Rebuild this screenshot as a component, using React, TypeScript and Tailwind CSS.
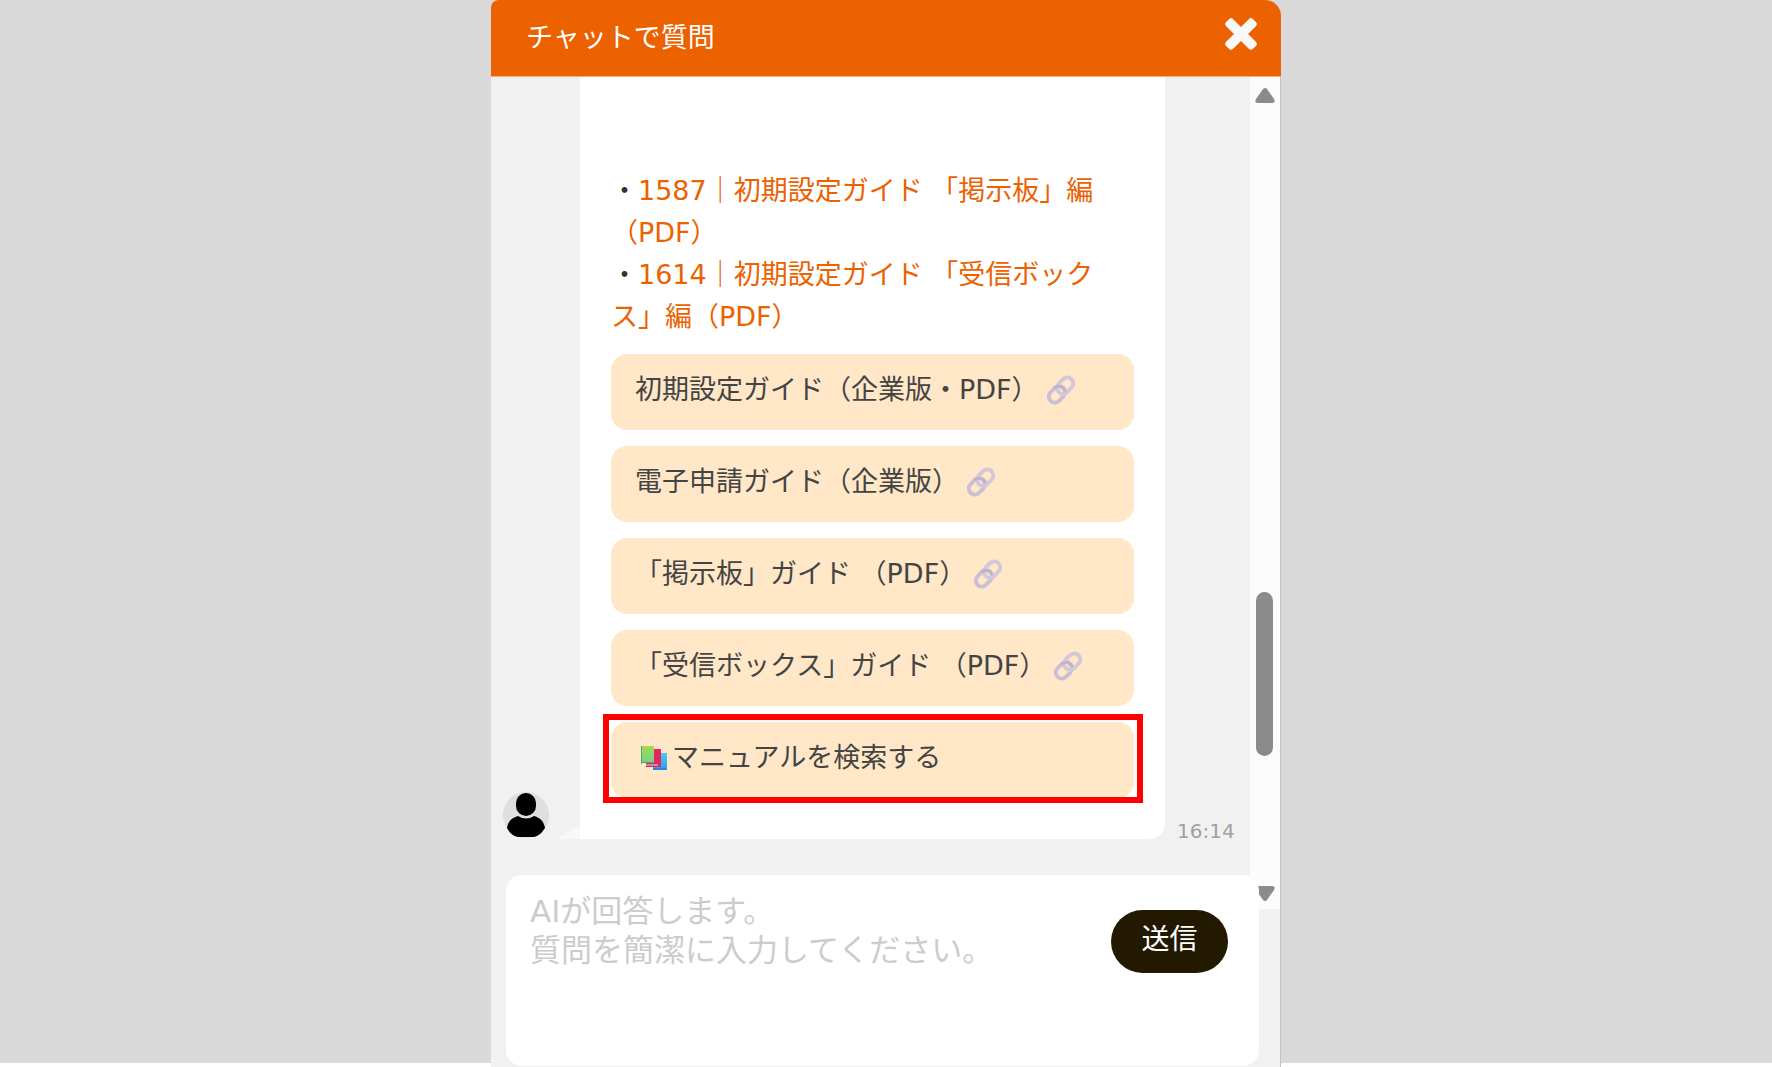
const guideLinks = [
  { id: "1587", title: "1587｜初期設定ガイド 「掲示板」編（PDF）" },
  { id: "1614", title: "1614｜初期設定ガイド 「受信ボックス」編（PDF）" },
];

const options = [
  "初期設定ガイド（企業版・PDF）",
  "電子申請ガイド（企業版）",
  "「掲示板」ガイド （PDF）",
  "「受信ボックス」ガイド （PDF）",
];

const optionClass =
  "flex h-[76px] w-full items-start rounded-2xl bg-[#ffe7c8] px-6 pt-[15px] text-left text-[27px] leading-[42px] text-[#444]";

function LinkIcon() {
  return (
    <svg viewBox="0 0 28 30" className="ml-2 mt-[6px] h-[30px] w-7 shrink-0" fill="none" aria-hidden="true">
      <g transform="rotate(-47 14 15)" strokeWidth="4">
        <rect x="-1" y="9" width="18" height="12" rx="6" stroke="#cbc0d3" />
        <rect x="11" y="9" width="18" height="12" rx="6" stroke="#d3c8d8" />
        <path d="M11 9a6 6 0 0 1 6 6a6 6 0 0 1-1 4" stroke="#bfb2cd" strokeWidth="3" />
      </g>
    </svg>
  );
}

function BooksIcon() {
  return (
    <svg viewBox="0 0 28 26" className="ml-[5px] mr-1 mt-2 h-[26px] w-7 shrink-0" aria-hidden="true">
      <defs>
        <linearGradient id="bookGreen" x1="0" y1="0" x2="0" y2="1">
          <stop offset="0" stopColor="#a2dc4f" />
          <stop offset="1" stopColor="#74d08a" />
        </linearGradient>
        <linearGradient id="bookBlue" x1="0" y1="0" x2="0" y2="1">
          <stop offset="0" stopColor="#4cc9f5" />
          <stop offset="1" stopColor="#2a9cf0" />
        </linearGradient>
      </defs>
      <path d="M13 8h14v17H13z" fill="url(#bookBlue)" />
      <path d="M13 23h13v2H13z" fill="#2f7fd6" />
      <path d="M6 4h15v18H6z" fill="#e0285f" />
      <path d="M6 19h12v2H6z" fill="#c98aa8" />
      <path d="M1 1h13v17H1z" fill="url(#bookGreen)" />
      <path d="M1 1h1v18H1zM1 17h13v1H1z" fill="#4fa868" />
    </svg>
  );
}

function Avatar() {
  return (
    <svg viewBox="0 0 48 48" className="h-12 w-12 shrink-0" role="img" aria-label="オペレーター">
      <circle cx="24" cy="24" r="23" fill="#dfdfdf" />
      <rect x="14" y="2" width="20" height="23" rx="10" fill="#000" />
      <path d="M16 25q8 5 16 0c7 2 10 6 11 12q-5 8-11 9H16q-7-1-11-9c1-6 4-10 11-12z" fill="#000" />
    </svg>
  );
}

function ScrollTrack() {
  return (
    <div className="flex w-[30px] shrink-0 flex-col items-center bg-[#fcfcfc] pb-2 pr-px pt-[11px]" aria-hidden="true">
      <svg viewBox="0 0 20 15" className="h-[15px] w-5" fill="#8b8b8b">
        <path d="M8 1q2-2 4 0l7 10q2 4-2 4H3q-4 0-2-4z" />
      </svg>
      <div className="mb-[130px] mt-auto h-[164px] w-[17px] rounded-full bg-[#8b8b8b]" />
      <svg viewBox="0 0 20 15" className="h-[15px] w-5" fill="#8b8b8b">
        <path d="M8 14q2 2 4 0l7-10q2-4-2-4H3Q-1 0 1 4z" />
      </svg>
    </div>
  );
}

export default function App() {
  return (
    <div className="flex min-h-screen bg-white font-['DejaVu_Sans','Noto_Sans_CJK_JP',sans-serif] [text-spacing-trim:space-all]">
      <div className="mb-1 flex-1 bg-[#d9d9d9]" />

      <main className="flex w-full max-w-[790px] flex-col bg-[#d9d9d9]">
        {/* Header */}
        <header className="flex h-[77px] items-start justify-between rounded-tl-lg rounded-tr-2xl border-b border-[#f3b080] bg-[#ec6100] pl-[35px] pr-6 text-white">
          <h1 className="pt-[18px] text-[27px] leading-10">チャットで質問</h1>
          <button type="button" aria-label="閉じる" className="mt-[18px]">
            <svg viewBox="0 0 32 32" className="h-8 w-8" fill="#f9f9f9">
              <rect x="-3" y="11" width="38" height="10" rx="3" transform="rotate(45 16 16)" />
              <rect x="-3" y="11" width="38" height="10" rx="3" transform="rotate(-45 16 16)" />
            </svg>
          </button>
        </header>

        <div className="flex flex-1 flex-col border-r border-[#c4c4c4] bg-[#f1f1f1]">
          {/* Messages */}
          <section className="flex">
            <div className="flex min-w-0 flex-1 items-end pb-[70px] pl-[11px]">
              <Avatar />
              <svg viewBox="0 0 23 15" className="ml-[7px] h-[15px] w-[23px] shrink-0" fill="#f8f8f8" aria-hidden="true">
                <path d="M0 15L23 0v15z" />
              </svg>
              <div className="w-[585px] rounded-br-2xl bg-white px-[31px] pb-[41px] pt-[93px]">
                <ul className="text-[27px] leading-[42px] text-[#333]">
                  {guideLinks.map((link) => (
                    <li key={link.id}>
                      ・
                      <a href={`#${link.id}`} className="text-[#ec6100]">
                        {link.title}
                      </a>
                    </li>
                  ))}
                </ul>
                <div className="mt-4 flex flex-col gap-4">
                  {options.map((label) => (
                    <button key={label} type="button" className={optionClass}>
                      {label}
                      <LinkIcon />
                    </button>
                  ))}
                  <div className="relative">
                    <button type="button" className={optionClass}>
                      <BooksIcon />
                      マニュアルを検索する
                    </button>
                    <div className="pointer-events-none absolute -bottom-[5px] -left-2 -right-[9px] -top-2 border-6 border-[#ff0000]" />
                  </div>
                </div>
              </div>
              <time className="ml-3 text-xl leading-4 text-[#a0a0a0]">16:14</time>
            </div>
            <ScrollTrack />
          </section>

          {/* Composer */}
          <form className="relative -mt-[34px] mb-px ml-[15px] mr-[21px] flex h-[191px] items-start rounded-2xl bg-white pl-6 pr-[31px]">
            <textarea
              aria-label="質問"
              placeholder={"AIが回答します。\n質問を簡潔に入力してください。"}
              className="h-full min-w-0 flex-1 resize-none bg-transparent pt-[17px] text-[31px] leading-[39px] outline-none placeholder:text-[#cccccc]"
            />
            <button
              type="button"
              className="mt-[35px] h-[63px] w-[117px] rounded-full bg-[#231800] pb-1 text-[28px] text-white"
            >
              送信
            </button>
          </form>
        </div>
      </main>

      <div className="mb-1 flex-1 bg-[#d9d9d9]" />
    </div>
  );
}
